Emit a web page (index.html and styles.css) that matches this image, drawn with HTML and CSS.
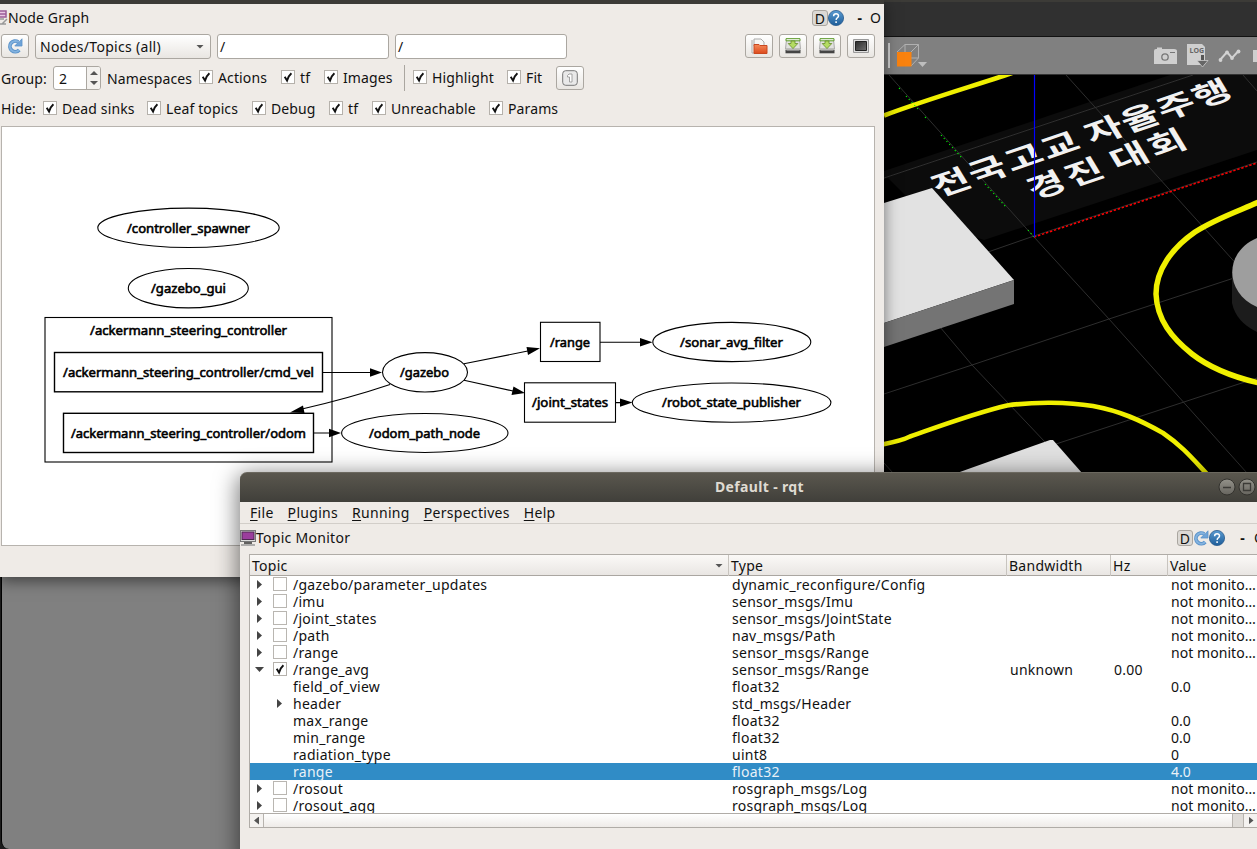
FILE: index.html
```
<!DOCTYPE html>
<html lang="en">
<head>
<meta charset="utf-8">
<title>Default - rqt</title>
<link rel="stylesheet" href="styles.css">
</head>
<body>
<svg class="defs" width="0" height="0">
  <defs>
    <linearGradient id="blue" x1="0" y1="0" x2="0" y2="1"><stop offset="0" stop-color="#5b9bd2"/><stop offset="1" stop-color="#1d5c98"/></linearGradient>
    <linearGradient id="orange" x1="0" y1="0" x2="0" y2="1"><stop offset="0" stop-color="#f58a5a"/><stop offset="1" stop-color="#dc4a1c"/></linearGradient>
    <linearGradient id="screen" x1="0" y1="0" x2="1" y2="1"><stop offset="0" stop-color="#2b2b2b"/><stop offset="1" stop-color="#707070"/></linearGradient>
    <linearGradient id="wb" x1="0" y1="0" x2="0" y2="1"><stop offset="0" stop-color="#94928a"/><stop offset="1" stop-color="#66645e"/></linearGradient>
    <symbol id="check" viewBox="0 0 14 14"><rect x=".5" y=".5" width="13" height="13" fill="#fff" stroke="#b5b1ab"/><path d="M3.7 6.8 6 10.6C7 7.5 8.300 5 10.400 3.200" fill="none" stroke="#111" stroke-width="1.9"/></symbol>
    <symbol id="box" viewBox="0 0 14 14"><rect x=".5" y=".5" width="13" height="13" fill="#fff" stroke="#b9b6b1"/></symbol>
    <symbol id="refresh" viewBox="0 0 16 16"><path d="M12.200 11.900A5.300 5.300 0 1 1 11.200 4" fill="none" stroke="#5a92c9" stroke-width="3.800"/><path d="M12.200 11.900A5.300 5.300 0 1 1 11.200 4" fill="none" stroke="#82b2df" stroke-width="2"/><path d="M15 .8V8H7.800L10 5.600 12.600 3.400Z" fill="#6ea3d7" stroke="#5a92c9" stroke-width=".8"/></symbol>
    <symbol id="help" viewBox="0 0 16 16"><circle cx="8" cy="8" r="7.600" fill="url(#blue)" stroke="#2b5c8e" stroke-width=".8"/><path d="M5.600 6.200C5.600 2.900 10.700 3.100 10.500 6 10.400 7.700 8.200 7.900 8.100 9.900M8.100 11.300V13" fill="none" stroke="#fff" stroke-width="1.500"/></symbol>
    <symbol id="save" viewBox="0 0 16 16"><path d="M1.500 1H14.500L15.500 11H.5Z" fill="#e2e2e0" stroke="#999" stroke-width=".8"/><path d="M1 .7H15V2.800H1Z" fill="#fff" stroke="#5b9a24"/><path d="M.5 10.500H15.500V12.500H.5Z" fill="#b8b8b4"/><path d="M.5 12H15.500V15.300H.5Z" fill="#444"/><path d="M1.500 12.500H14.500" stroke="#888"/><path d="M6 3H10V5.500H12.800L8 10.600 3.200 5.500H6Z" fill="#b4dc62" stroke="#648c28" stroke-width=".8"/></symbol>
  </defs>
</svg>
<main class="desktop">
  <section class="gazebo">
    <div class="gz-top"></div>
    <div class="gz-bar">
      <svg width="373" height="37" viewBox="884 37 373 37">
        <path d="M889 43V68" stroke="#eee" stroke-width="1.500"/>
        <path d="M897 52 905 44.500H918.500L911 52M918.500 44.500V58L911 66M905 44.500V58H918.500M905 58 897 66" fill="none" stroke="#b0b0b0"/>
        <path d="M897 52H911.500V66.500H897Z" fill="#f9820f"/><path d="M918 62H927L922.500 67Z" fill="#bebebe"/>
        <g fill="#cfcfcf"><path d="M1154 51Q1154 49 1156 49H1157V47.500H1162V49H1174Q1177 49 1177 51V64H1154Z"/><path d="M1187 44H1202L1205 47V65H1187Z"/><path d="M1253 50H1260V62H1253Z"/></g>
        <circle cx="1165" cy="57" r="3.200" fill="none" stroke="#777" stroke-width="1.300"/><path d="M1170 52.500H1175" stroke="#777"/>
        <text x="1189.500" y="53" class="log">LOG</text><path d="M1202.500 55V61" stroke="#555" stroke-width="3"/><path d="M1197 60.500H1208L1202.500 67Z" fill="#666" stroke="#ccc" stroke-width=".8"/>
        <path d="M1220 60 1227 52 1232 58 1238.500 51" fill="none" stroke="#d2d2d2" stroke-width="2"/><g fill="#d2d2d2"><circle cx="1220.500" cy="60" r="1.900"/><circle cx="1227" cy="52.500" r="1.900"/><circle cx="1232" cy="58" r="1.900"/><circle cx="1238.500" cy="51.500" r="1.900"/></g>
      </svg>
    </div>
    <svg class="scene" width="373" height="398" viewBox="884 75 373 398">
      <path d="M884 75H1257V473H884Z" fill="#000"/>
      <path d="M884 171 1170 75H1257V150L984 240 932 222 888 178 884 179Z" fill="#0c0c0c"/>
      <g class="grid">
        <path d="M889 75 1034 237 1109 319 1247 473M1066 75 1214 239 1240 268M1243 75 1257 91M940 327 972 365 1045 442M884 463 893 473"/>
        <path d="M884 178 1193 75M1257 162 1034 236 988 252M884 394 972 365 1109 319 1234 278M1056 444 1257 378"/>
      </g>
      <g class="road">
        <path d="M884 115.500C925 100 970 87 1012 73"/>
        <path d="M1259 202C1236 212 1215 219 1195 232C1172 248 1156 270 1156 294C1157 320 1172 338 1192 354C1210 368 1233 377 1259 383" stroke-width="5.500"/>
        <path d="M882 444.500C895 442 903 440 910 436.500C940 426 975 413 1007 405.500C1035 401.500 1068 402 1093 406C1120 411 1140 420 1163 433C1182 446 1192 458 1207 474"/>
      </g>
      <g class="sign">
        <text transform="matrix(.97 -.33 .38 .63 939 197)" textLength="148">전국고교</text>
        <text transform="matrix(.97 -.33 .38 .63 1092 145)" textLength="147">자율주행</text>
        <text transform="matrix(.97 -.33 .38 .63 1034 200)" textLength="75">경진</text>
        <text transform="matrix(.97 -.33 .38 .63 1117 171)" textLength="75">대회</text>
      </g>
      <path d="M884 203 932 188 1014 280 884 323Z" fill="#e2e2e2"/><path d="M884 323 1014 280V304L884 347Z" fill="#747474"/>
      <path d="M957 473 1050 440H1053L1082 473Z" fill="#e0e0e0"/>
      <path d="M1232 272V303Q1236 322 1257 332V307Z" fill="#1c1c1c"/><path d="M1257 238C1224 252 1224 292 1257 307Z" fill="#9e9e9e"/>
      <path d="M899 88 902 91M906 96 918 109M925 117 928 120M941 135 962 158M985 184 1006 207M1028 230 1034 237" class="green"/>
      <path d="M1034 237 1257 163" class="red"/><path d="M1034.500 75V237" stroke="#00f" stroke-width="1.200"/>
    </svg>
  </section>
  <section class="gz-panel"></section>

  <section class="nodegraph">
    <header class="dock ng-dock">
      <svg width="8" height="16" viewBox="0 0 8 16"><path d="M0 1H6V7H0M0 4H6" fill="#e8c8e4" stroke="#9a5c98" stroke-width="1.500"/><path d="M0 9H4M2 14 7 9M0 14H6" stroke="#999" stroke-width="1.500"/></svg>
      <span class="grow">Node Graph</span>
      <b class="dbtn">D</b><svg width="16" height="16"><use href="#help"/></svg><span class="min">-</span><span class="max">O</span>
    </header>
    <div class="tools">
      <span class="btn"><svg width="16" height="16"><use href="#refresh"/></svg></span>
      <span class="combo">Nodes/Topics (all)<i class="caret"></i></span>
      <span class="input">/</span><span class="input">/</span><span class="grow"></span>
      <span class="btn"><svg width="17" height="17" viewBox="0 0 17 17"><path d="M1 2V15H6M3 1H10L13 4V8H3Z" fill="#f6f6f4" stroke="#aaa"/><path d="M3 6.500H8L9 7.500H16V15.500H3Z" fill="url(#orange)" stroke="#c84820"/></svg></span>
      <span class="btn"><svg width="16" height="16"><use href="#save"/></svg></span>
      <span class="btn"><svg width="16" height="16"><use href="#save"/></svg></span>
      <span class="btn"><svg width="16" height="14" viewBox="0 0 16 14"><path d="M.5 .5H15.500V13.500H.5Z" fill="#ddd" stroke="#999"/><path d="M2.500 2.500H13.500V11.500H2.500Z" fill="url(#screen)" stroke="#222"/></svg></span>
    </div>
    <div class="opts groups">
      <span>Group:</span><span class="spin">2<i></i></span><span>Namespaces</span>
      <label><svg><use href="#check"/></svg>Actions</label><label><svg><use href="#check"/></svg>tf</label><label><svg><use href="#check"/></svg>Images</label>
      <span class="sep"></span>
      <label><svg><use href="#check"/></svg>Highlight</label><label><svg><use href="#check"/></svg>Fit</label>
      <span class="btn"><svg width="16" height="16" viewBox="0 0 16 16"><rect x=".7" y=".7" width="14.600" height="14.600" rx="3" fill="#e9e9e9" stroke="#777"/><path d="M5.500 5.500 7 4H10V12H7.500V7H5.500Z" fill="#fff" stroke="#999" stroke-width=".9"/></svg></span>
    </div>
    <div class="opts hides">
      <span>Hide:</span>
      <label><svg><use href="#check"/></svg>Dead sinks</label><label><svg><use href="#check"/></svg>Leaf topics</label><label><svg><use href="#check"/></svg>Debug</label><label><svg><use href="#check"/></svg>tf</label><label><svg><use href="#check"/></svg>Unreachable</label><label><svg><use href="#check"/></svg>Params</label>
    </div>
    <div class="canvas">
      <svg width="872" height="418" viewBox="2 127 872 418">
        <g class="shape">
          <ellipse cx="188.500" cy="227.800" rx="90.700" ry="19.700"/><ellipse cx="188.300" cy="288.200" rx="60" ry="19.700"/>
          <rect x="45" y="317.500" width="287" height="144.500"/>
          <rect x="54.500" y="352.500" width="268" height="39.300" class="thick"/><rect x="63.500" y="413.300" width="250" height="39.200" class="thick"/>
          <ellipse cx="425" cy="372.300" rx="42.500" ry="19.700"/><ellipse cx="424.800" cy="433" rx="83.200" ry="19.500"/>
          <rect x="540.500" y="322.300" width="59.500" height="39.200"/><rect x="524.500" y="382.800" width="91" height="39.400"/>
          <ellipse cx="731.800" cy="342" rx="79" ry="19.600"/><ellipse cx="731.600" cy="402.600" rx="99.300" ry="19.600"/>
          <path d="M323 372.500H370M390 384.500Q350 398 302 409M314 433H330M464 363.700 529 350.800M464 380.300 513 391M600 342.300H641M616 402.600H621"/>
        </g>
        <path d="M370 368.300 382 372.500 370 376.700ZM303 405.500 290 412.500 304.500 413ZM329 428.800 341 433 329 437.200ZM526.500 347 540 348.300 528 355ZM513.500 386.500 525 393 511.500 395ZM640 338 652.500 342.200 640 346.500ZM620 398.400 632.500 402.600 620 406.800Z"/>
        <g class="names">
          <text x="127" y="232.500" textLength="123" lengthAdjust="spacingAndGlyphs">/controller_spawner</text><text x="151" y="293" textLength="75" lengthAdjust="spacingAndGlyphs">/gazebo_gui</text>
          <text x="90" y="335" textLength="197" lengthAdjust="spacingAndGlyphs">/ackermann_steering_controller</text>
          <text x="63" y="377" textLength="251" lengthAdjust="spacingAndGlyphs">/ackermann_steering_controller/cmd_vel</text>
          <text x="71" y="437.500" textLength="235" lengthAdjust="spacingAndGlyphs">/ackermann_steering_controller/odom</text>
          <text x="400" y="377" textLength="49" lengthAdjust="spacingAndGlyphs">/gazebo</text><text x="369" y="437.500" textLength="111" lengthAdjust="spacingAndGlyphs">/odom_path_node</text>
          <text x="550" y="346.500" textLength="40" lengthAdjust="spacingAndGlyphs">/range</text><text x="532" y="407" textLength="76" lengthAdjust="spacingAndGlyphs">/joint_states</text>
          <text x="680" y="346.500" textLength="103" lengthAdjust="spacingAndGlyphs">/sonar_avg_filter</text><text x="662" y="407" textLength="139" lengthAdjust="spacingAndGlyphs">/robot_state_publisher</text>
        </g>
      </svg>
    </div>
  </section>

  <section class="rqt">
    <header class="title"><h1>Default - rqt</h1>
      <svg class="wbtns" width="44" height="20" viewBox="1217 477 44 20"><g fill="url(#wb)" stroke="#33322e"><circle cx="1227" cy="487" r="8"/><circle cx="1247" cy="487" r="8"/></g><path d="M1223 487.500H1231M1243.500 483.500H1250.500V490.500H1243.500Z" fill="none" stroke="#3c3b37" stroke-width="1.300"/></svg>
    </header>
    <nav class="menu"><span><u>F</u>ile</span><span><u>P</u>lugins</span><span><u>R</u>unning</span><span><u>P</u>erspectives</span><span><u>H</u>elp</span></nav>
    <div class="dock tm-dock">
      <svg width="16" height="16" viewBox="0 0 16 16"><rect x=".5" y=".5" width="15" height="11" fill="#ddd" stroke="#777"/><rect x="2" y="2" width="12" height="7.500" fill="#9b3e9d" stroke="#4e2850"/><path d="M4 13H12" stroke="#333" stroke-width="1.500"/><path d="M1 15H15" stroke="#999" stroke-width="1.500"/></svg>
      <span class="grow">Topic Monitor</span>
      <b class="dbtn">D</b><svg width="16" height="16"><use href="#refresh"/></svg><svg width="16" height="16"><use href="#help"/></svg><span class="min">-</span><span class="max">O</span>
    </div>
    <div class="tree">
      <div class="cols head"><span>Topic<i class="caret"></i></span><span>Type</span><span>Bandwidth</span><span>Hz</span><span>Value</span></div>
      <div class="rows">
        <div class="cols"><span class="top"><i></i><svg><use href="#box"/></svg>/gazebo/parameter_updates</span><span>dynamic_reconfigure/Config</span><span></span><span></span><span>not monito…</span></div>
        <div class="cols"><span class="top"><i></i><svg><use href="#box"/></svg>/imu</span><span>sensor_msgs/Imu</span><span></span><span></span><span>not monito…</span></div>
        <div class="cols"><span class="top"><i></i><svg><use href="#box"/></svg>/joint_states</span><span>sensor_msgs/JointState</span><span></span><span></span><span>not monito…</span></div>
        <div class="cols"><span class="top"><i></i><svg><use href="#box"/></svg>/path</span><span>nav_msgs/Path</span><span></span><span></span><span>not monito…</span></div>
        <div class="cols"><span class="top"><i></i><svg><use href="#box"/></svg>/range</span><span>sensor_msgs/Range</span><span></span><span></span><span>not monito…</span></div>
        <div class="cols"><span class="top open"><i></i><svg><use href="#check"/></svg>/range_avg</span><span>sensor_msgs/Range</span><span>unknown</span><span>0.00</span><span></span></div>
        <div class="cols"><span class="leaf">field_of_view</span><span>float32</span><span></span><span></span><span>0.0</span></div>
        <div class="cols"><span class="leaf sub"><i></i>header</span><span>std_msgs/Header</span><span></span><span></span><span></span></div>
        <div class="cols"><span class="leaf">max_range</span><span>float32</span><span></span><span></span><span>0.0</span></div>
        <div class="cols"><span class="leaf">min_range</span><span>float32</span><span></span><span></span><span>0.0</span></div>
        <div class="cols"><span class="leaf">radiation_type</span><span>uint8</span><span></span><span></span><span>0</span></div>
        <div class="cols sel"><span class="leaf">range</span><span>float32</span><span></span><span></span><span>4.0</span></div>
        <div class="cols"><span class="top"><i></i><svg><use href="#box"/></svg>/rosout</span><span>rosgraph_msgs/Log</span><span></span><span></span><span>not monito…</span></div>
        <div class="cols"><span class="top"><i></i><svg><use href="#box"/></svg>/rosout_agg</span><span>rosgraph_msgs/Log</span><span></span><span></span><span>not monito…</span></div>
      </div>
      <div class="scroll"><b class="left"></b><span class="thumb"></span><span class="trough"></span><b class="right"></b></div>
    </div>
  </section>
</main>
</body>
</html>
```
FILE: styles.css
```
* { box-sizing: border-box; }
body { margin: 0; font: 14px/17px "Noto Sans", "Open Sans", sans-serif; color: #111; }
.defs { position: absolute; }
.desktop { position: relative; width: 1257px; height: 849px; overflow: hidden; background: #1c1c1c; }
svg { display: block; flex: none; }
.grow { flex: 1; }

/* Gazebo window */
.gazebo { position: absolute; left: 884px; top: 0; width: 373px; height: 473px; background: #303030; }
.gz-top { height: 37px; border-top: 2px solid #3c3b37; border-bottom: 1px solid #111; }
.gz-bar { height: 38px; background: #808080; border-bottom: 1px solid #333; }
.log { font: bold 7px "Open Sans", sans-serif; fill: #666; }
.grid { fill: none; stroke: #333; stroke-width: .9; }
.road { fill: none; stroke: #f0f000; stroke-width: 4.6; }
.sign { font: 700 39px "Noto Sans CJK KR", sans-serif; fill: #f2f2f2; }
.green { stroke: #0f0; stroke-width: 1.1; stroke-dasharray: 1.2 2.9; }
.red { stroke: #f00; stroke-width: 1.5; stroke-dasharray: 2.4 1.8; }
.gz-panel { position: absolute; left: 1px; top: 570px; width: 300px; height: 279px; background: #808080; border-left: 1px solid #000; border-bottom-left-radius: 8px; }

/* Docks */
.dock { display: flex; align-items: center; }
.dbtn { width: 16px; height: 16px; border: 1px solid #aaa6a0; border-radius: 3px; background: #dcd9d5; font-weight: 400; text-align: center; line-height: 15px; }
.min { width: 29px; text-align: right; padding-right: 9px; font-weight: 700; }
.max { width: 19px; }

/* Node graph window */
.nodegraph { position: absolute; left: 0; top: 0; width: 884px; height: 577px; padding-right: 9px; background: #efebe7; border-top: 4px solid #3c3b37; box-shadow: 0 4px 14px rgba(0,0,0,.5); }
.ng-dock { height: 27px; margin-right: -9px; padding-right: 1px; letter-spacing: .12px; }
.ng-dock .min { width: 26px; padding-right: 8px; }
.ng-dock .max { width: 13px; }
.tools { display: flex; gap: 6px; height: 32px; padding: 3px 0 0 1px; }
.btn { display: flex; align-items: center; justify-content: center; width: 28px; height: 24px; border: 1px solid #aba7a1; border-radius: 3px; background: linear-gradient(#fff, #e9e6e2); }
.combo, .input { height: 25px; border: 1px solid #aba7a1; border-radius: 3px; line-height: 24px; white-space: nowrap; }
.combo { display: flex; align-items: center; justify-content: space-between; width: 176px; padding: 0 6px 0 4px; background: linear-gradient(#fff, #e9e6e2); letter-spacing: .3px; }
.input { width: 172px; padding-left: 2px; background: #fff; }
.caret { width: 8px; height: 4px; background: #555; clip-path: polygon(0 0, 100% 0, 50% 100%); }
.opts { display: grid; align-items: center; white-space: nowrap; height: 30px; padding-left: 1px; letter-spacing: .12px; }
.opts label { display: flex; align-items: center; gap: 5px; }
.opts label svg { width: 14px; height: 14px; }
.groups { grid-template-columns: 52px 54px 92px 82px 43px 80px 9px 94px 49px 28px; }
.groups label { margin-top: -2px; }
.groups .sep { width: 1px; height: 26px; background: #aaa6a0; }
.hides { grid-template-columns: 42px 104px 105px 77px 43px 117px 90px; }
.spin { display: flex; justify-content: space-between; width: 48px; height: 24px; padding-left: 5px; line-height: 23px; border: 1px solid #aba7a1; border-radius: 3px; background: #fff; overflow: hidden; }
.spin i { position: relative; width: 14px; border-left: 1px solid #aba7a1; background: #f3f1ee; }
.spin i::before, .spin i::after { content: ""; position: absolute; left: 3px; width: 8px; height: 4px; background: #555; }
.spin i::before { top: 4px; clip-path: polygon(50% 0, 100% 100%, 0 100%); }
.spin i::after { bottom: 4px; clip-path: polygon(0 0, 100% 0, 50% 100%); }
.canvas { margin: 3px 0 0 1px; width: 874px; height: 420px; border: 1px solid #b7b3ae; background: #fff; }
.shape { fill: none; stroke: #000; stroke-width: 1.1; }
.thick { stroke-width: 1.4; }
.names { font: 13px "Noto Sans", sans-serif; stroke: #000; stroke-width: .6; }

/* rqt window */
.rqt { position: absolute; left: 240px; top: 472px; width: 1030px; height: 390px; background: #efebe7; border-radius: 7px 7px 0 0; box-shadow: 0 5px 22px 3px rgba(0,0,0,.5); }
.title { position: relative; height: 30px; border-radius: 7px 7px 0 0; background: linear-gradient(#5a574e, #403f3a); border-top: 1px solid #6b685f; }
.title h1 { margin: 0; padding-left: 475px; font-size: 14px; letter-spacing: .35px; line-height: 28px; font-weight: 700; color: #dfdbd2; }
.wbtns { position: absolute; left: 977px; top: 4px; }
.menu { display: flex; gap: 14px; height: 22px; padding: 2px 0 0 10px; border-bottom: 1px solid #d2cec9; letter-spacing: .3px; }
.menu u { text-underline-offset: 2px; }
.tm-dock { height: 30px; padding: 0 0 3px; width: 1032px; letter-spacing: .28px; }
.tm-dock .max { width: 18px; }
.tree { display: flex; flex-direction: column; margin-left: 9px; width: 1030px; height: 274px; border: 1px solid #b0aca7; background: #fff; }
.cols { display: grid; grid-template-columns: 479px 278px 104px 57px 100px; height: 17px; white-space: nowrap; letter-spacing: .27px; }
.cols > span { padding-left: 3px; line-height: 17px; }
.cols > span:last-child { letter-spacing: .05px; }
.head { height: 21px; background: linear-gradient(#fbf9f7, #e9e6e3); border-bottom: 1px solid #aaa6a1; }
.head > span { padding-left: 2px; line-height: 21px; border-right: 1px solid #c8c4bf; }
.head > span:first-child { display: flex; justify-content: space-between; align-items: center; padding-right: 5px; }
.rows { height: 237px; overflow: hidden; }
.cols .top { display: flex; align-items: center; padding-left: 7px; }
.top svg { width: 14px; height: 14px; margin: -2px 6px 0 11px; }
.top i, .sub i { width: 5px; height: 9px; background: #444; clip-path: polygon(0 0, 100% 50%, 0 100%); }
.top.open { padding-left: 5px; }
.top.open i { width: 9px; height: 5px; clip-path: polygon(0 0, 100% 0, 50% 100%); }
.top.open svg { margin-left: 9px; }
.cols .leaf { padding-left: 43px; }
.cols .sub { display: flex; align-items: center; padding-left: 27px; gap: 11px; }
.sel { background: #308cc6; color: #e9f1f7; }
.scroll { display: flex; height: 14px; border-top: 1px solid #b0aca7; background: #f4f2f0; }
.scroll b { display: flex; align-items: center; justify-content: center; width: 14px; }
.scroll .left { border-right: 1px solid #b7b3ae; }
.scroll b::before { content: ""; width: 5px; height: 8px; background: #555; clip-path: polygon(0 0, 100% 50%, 0 100%); }
.scroll .left::before { transform: scaleX(-1); }
.thumb { width: 969px; background: linear-gradient(#fff, #eeebe8); border-right: 1px solid #b7b3ae; }
.trough { width: 11px; background: #dfdcd8; border-right: 1px solid #b7b3ae; }
```
